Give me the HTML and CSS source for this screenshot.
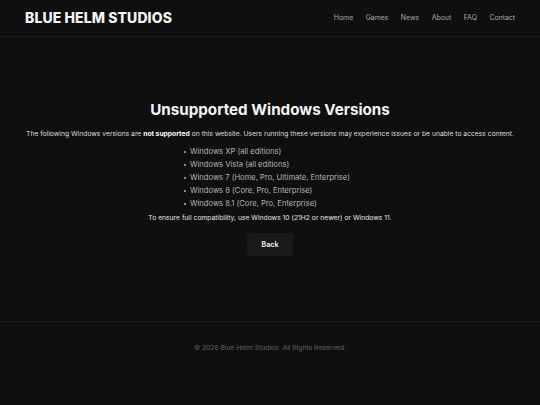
FILE: index.html
```html
<!DOCTYPE html>
<html lang="en">
<head>
<meta charset="utf-8">
<title>Unsupported Windows Versions - Blue Helm Studios</title>
<link rel="stylesheet" href="styles.css">
</head>
<body>
<div class="page">
  <header class="site-header">
    <div class="logo">BLUE HELM STUDIOS</div>
    <nav class="nav">
      <a href="#">Home</a>
      <a href="#">Games</a>
      <a href="#">News</a>
      <a href="#">About</a>
      <a href="#">FAQ</a>
      <a href="#">Contact</a>
    </nav>
  </header>
  <main class="main">
    <h1 class="title">Unsupported Windows Versions</h1>
    <p class="intro">The following Windows versions are <strong>not supported</strong> on this website. Users running these versions may experience issues or be unable to access content.</p>
    <ul class="versions">
      <li>Windows XP (all editions)</li>
      <li>Windows Vista (all editions)</li>
      <li>Windows 7 (Home, Pro, Ultimate, Enterprise)</li>
      <li>Windows 8 (Core, Pro, Enterprise)</li>
      <li>Windows 8.1 (Core, Pro, Enterprise)</li>
    </ul>
    <p class="note">To ensure full compatibility, use Windows 10 (21H2 or newer) or Windows 11.</p>
    <a href="#" class="back">Back</a>
  </main>
  <footer class="site-footer">© 2026 Blue Helm Studios. All Rights Reserved.</footer>
</div>
</body>
</html>
```
FILE: styles.css
```css
* { box-sizing: border-box; }
html, body { margin: 0; padding: 0; }
body {
  background: #0f0f0f;
  color: #f2f2f2;
  font-family: Inter, "Noto Sans", sans-serif;
}
.page {
  min-height: 405px;
  display: flex;
  flex-direction: column;
}
.site-header {
  height: 37px;
  border-bottom: 1px solid #1a1a1a;
  display: flex;
  align-items: center;
  justify-content: space-between;
  padding: 0 25px 1px 25px;
}
.logo {
  font-size: 14px;
  font-weight: 800;
  color: #f4f4f4;
  letter-spacing: 0.1px;
}
.nav {
  display: flex;
  gap: 12.5px;
}
.nav a {
  color: #a8a8a8;
  font-size: 6.9px;
  text-decoration: none;
}
.main {
  height: 284px;
  display: flex;
  flex-direction: column;
  align-items: center;
  justify-content: center;
  padding-bottom: 3px;
}
.title {
  margin: 0 0 7px;
  font-size: 15.2px;
  font-weight: 700;
  color: #f4f4f4;
  line-height: 22px;
}
.intro {
  margin: 0 0 5px;
  font-size: 6.75px;
  line-height: 12px;
  color: #dcdcdc;
}
.intro strong { color: #fff; font-weight: 700; }
.versions {
  margin: 0 6px 0 0;
  padding: 0;
  list-style: none;
}
.versions li {
  font-size: 7.6px;
  line-height: 13px;
  color: #b4b4b4;
  position: relative;
  padding-left: 6px;
}
.versions li::before {
  content: "";
  position: absolute;
  left: 0;
  top: 6px;
  width: 2px;
  height: 2px;
  border-radius: 50%;
  background: #b4b4b4;
}
.note {
  margin: 2px 0 9px;
  font-size: 6.75px;
  line-height: 12px;
  color: #e6e6e6;
}
.back {
  display: flex;
  align-items: center;
  justify-content: center;
  width: 46px;
  height: 23px;
  background: #1a1a1a;
  border-radius: 4px;
  color: #e8e8e8;
  font-size: 7px;
  font-weight: 700;
  text-decoration: none;
}
.site-footer {
  border-top: 1px solid #1a1a1a;
  flex: 1;
  text-align: center;
  font-size: 6.75px;
  color: #606060;
  padding-top: 21px;
}
```
